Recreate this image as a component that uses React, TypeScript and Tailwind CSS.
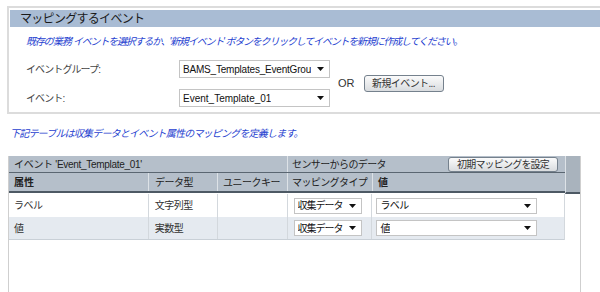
import React from "react";

function Arrow() {
  return (
    <svg width="7" height="4" viewBox="0 0 7 4" className="shrink-0">
      <path d="M0 0 L7 0 L3.5 4 Z" fill="#111" />
    </svg>
  );
}

function Select({ value, w, h, t = "" }: { value: string; w: string; h: string; t?: string }) {
  return (
    <div
      className={`${w} ${h} flex items-center justify-between border border-[#c4c4c4] bg-white pl-[3px] pr-[5px] text-[10px] text-[#111] overflow-hidden`}
    >
      <span className={`whitespace-nowrap overflow-hidden mr-[5px] ${t}`}>{value}</span>
      <Arrow />
    </div>
  );
}

export default function App() {
  return (
    <div className="w-[600px] h-[292px] overflow-hidden bg-white font-['Liberation_Sans','Noto_Sans_CJK_JP',sans-serif] text-[10px] text-[#333]">
      <div className="pt-[6px] pl-[7px]">
        <div className="w-[620px] border-2 border-r-0 border-[#dcdcdc] pt-[2px] pl-[1px]">
          <div className="h-[17px] bg-[#a9bcd4] pl-[10px] flex items-center text-[12px] tracking-[-0.7px] text-[#1a1a1a]">
            マッピングするイベント
          </div>
          <div className="mt-[8px] pl-[16px] h-[14px] leading-[14px] italic text-[10px] tracking-[-1.2px] text-[#1f3fd0] whitespace-nowrap">
            既存の'業務' イベントを選択するか、'新規イベント' ボタンをクリックしてイベントを新規に作成してください。
          </div>
          <div className="mt-[11px] pl-[16px] pb-[5px] flex items-center">
            <div className="flex flex-col gap-[11px]">
              <div className="flex items-center">
                <div className="w-[153px] tracking-[-0.9px] text-[#444]">イベントグループ:</div>
                <Select value="BAMS_Templates_EventGrou" w="w-[151px]" h="h-[18px]" t="tracking-[-0.2px]" />
              </div>
              <div className="flex items-center">
                <div className="w-[153px] tracking-[-0.9px] text-[#444]">イベント:</div>
                <Select value="Event_Template_01" w="w-[151px]" h="h-[18px]" />
              </div>
            </div>
            <div className="ml-[8px] text-[11px] text-[#333]">OR</div>
            <div className="ml-[9px] w-[80px] h-[17px] rounded-[3px] border border-[#75818d] bg-gradient-to-b from-[#fbfbfb] to-[#d9dcdf] flex items-center justify-center text-[10px] tracking-[-0.6px] text-[#333]">
              新規イベント...
            </div>
          </div>
        </div>
      </div>

      <div className="mt-[13px] pl-[10px] h-[14px] leading-[14px] italic text-[10px] tracking-[-0.8px] text-[#1f3fd0] whitespace-nowrap">
        下記テーブルは収集データとイベント属性のマッピングを定義します。
      </div>

      <div className="mt-[15px] ml-[8px] w-[573px] h-[200px] border-x border-[#cfcfcf]">
        <div className="flex">
          <div className="w-[556px]">
            <div className="h-[17px] flex bg-[#b5bfca] border-b border-[#5a6671] text-[10px] text-[#222]">
              <div className="w-[278px] pl-[5px] flex items-center tracking-[-0.3px]">
                イベント 'Event_Template_01'
              </div>
              <div className="w-[278px] border-l border-[#dde2e7] pl-[4px] pr-[7px] flex items-center justify-between">
                <span className="tracking-[-0.6px]">センサーからのデータ</span>
                <div className="w-[110px] h-[15px] rounded-[3px] border border-[#75818d] bg-gradient-to-b from-[#fbfbfb] to-[#d9dcdf] flex items-center justify-center tracking-[-0.8px] text-[#333]">
                  初期マッピングを設定
                </div>
              </div>
            </div>
            <div className="h-[20px] flex bg-[#b5bfca] border-b-2 border-[#4d5964] text-[10px] text-[#222]">
              <div className="w-[139px] pl-[5px] flex items-center font-bold">属性</div>
              <div className="w-[69px] border-l border-[#dde2e7] pl-[6px] flex items-center tracking-[-0.5px]">データ型</div>
              <div className="w-[70px] border-l border-[#dde2e7] pl-[5px] flex items-center tracking-[-0.5px]">ユニークキー</div>
              <div className="w-[85px] border-l border-[#dde2e7] pl-[4px] flex items-center tracking-[-0.6px]">マッピングタイプ</div>
              <div className="w-[193px] border-l border-[#dde2e7] pl-[5px] flex items-center font-bold">値</div>
            </div>
          </div>
          <div className="w-[15px] h-[38px] bg-[#a9b3bd] border-l border-[#dde2e7] border-b-2 border-b-[#4d5964]"></div>
        </div>

        <div className="w-[556px] border-r border-[#d3d8dd] text-[10px] text-[#333]">
          <div className="h-[23px] flex bg-white">
            <div className="w-[139px] pl-[5px] flex items-center tracking-[-0.5px]">ラベル</div>
            <div className="w-[69px] border-l border-[#d3d8dd] pl-[6px] flex items-center tracking-[-0.5px]">文字列型</div>
            <div className="w-[70px] border-l border-[#d3d8dd]"></div>
            <div className="w-[85px] border-l border-[#d3d8dd] pl-[6px] flex items-center">
              <Select value="収集データ" w="w-[68px]" h="h-[16px]" t="tracking-[-1px]" />
            </div>
            <div className="w-[193px] border-l border-[#d3d8dd] pl-[4px] flex items-center">
              <Select value="ラベル" w="w-[161px]" h="h-[16px]" t="tracking-[-0.5px]" />
            </div>
          </div>
          <div className="h-[23px] flex bg-[#e5eaf0] border-b border-[#c9d0d7]">
            <div className="w-[139px] pl-[5px] flex items-center">値</div>
            <div className="w-[69px] border-l border-[#d3d8dd] pl-[6px] flex items-center tracking-[-0.5px]">実数型</div>
            <div className="w-[70px] border-l border-[#d3d8dd]"></div>
            <div className="w-[85px] border-l border-[#d3d8dd] pl-[6px] flex items-center">
              <Select value="収集データ" w="w-[68px]" h="h-[16px]" t="tracking-[-1px]" />
            </div>
            <div className="w-[193px] border-l border-[#d3d8dd] pl-[4px] flex items-center">
              <Select value="値" w="w-[161px]" h="h-[16px]" />
            </div>
          </div>
        </div>
      </div>
    </div>
  );
}
